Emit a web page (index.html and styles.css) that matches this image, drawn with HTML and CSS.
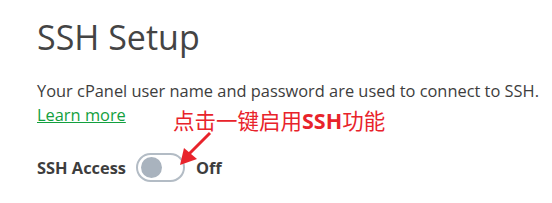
FILE: index.html
```html
<!DOCTYPE html>
<html lang="en">
  <head>
    <meta charset="UTF-8" />
    <meta name="viewport" content="width=device-width, initial-scale=1.0" />
    <title>SSH Setup</title>
    <link rel="stylesheet" href="styles.css">
  </head>
  <body>
    <div class="page">
      <h1>SSH Setup</h1>
      <p class="desc">Your cPanel user name and password are used to connect to SSH.</p>
      <a class="learn" href="#">Learn more</a>
      <div class="access">
        <span class="access-label">SSH Access</span>
        <span class="toggle"><span class="knob"></span></span>
        <span class="state">Off</span>
      </div>
      <div class="note">点击一键启用<b>SSH</b>功能</div>
      <svg class="arrow" width="40" height="40" viewBox="0 0 40 40">
        <line x1="36" y1="3" x2="14" y2="25" stroke="#e8232b" stroke-width="3" />
        <polygon points="6,35 10,18 23,29" fill="#e8232b" />
      </svg>
    </div>
  </body>
</html>
```

FILE: styles.css
```css
body {
  margin: 0;
  background: #fff;
  font-family: "Open Sans", "Noto Sans", sans-serif;
  color: #3d3d3d;
}
.page {
  position: relative;
  padding: 16px 0 0 37px;
  height: 187px;
}
h1 {
  margin: 0;
  font-size: 34px;
  font-weight: 400;
  line-height: 42px;
  color: #444;
}
.desc {
  margin: 21px 0 0;
  font-size: 16.4px;
  line-height: 24px;
  white-space: nowrap;
}
.learn {
  display: inline-block;
  font-size: 16.4px;
  line-height: 24px;
  color: #12a03e;
}
.access {
  display: flex;
  align-items: center;
  margin-top: 26px;
  font-size: 16.4px;
  font-weight: 700;
}
.toggle {
  box-sizing: border-box;
  width: 49px;
  height: 29px;
  margin: 0 11px 0 10px;
  padding: 2px 0 0 3px;
  border: 2px solid #b3bcc5;
  border-radius: 15px;
  background: #fff;
}
.knob {
  display: block;
  width: 21px;
  height: 21px;
  border-radius: 50%;
  background: #a9b3be;
}
.note {
  position: absolute;
  left: 173px;
  top: 106px;
  font-family: "Noto Sans CJK SC", sans-serif;
  font-size: 21.5px;
  line-height: 28px;
  color: #e8232b;
}
.note b {
  font-family: "Open Sans", "Noto Sans", sans-serif;
}
.arrow {
  position: absolute;
  left: 174px;
  top: 130px;
}
```
